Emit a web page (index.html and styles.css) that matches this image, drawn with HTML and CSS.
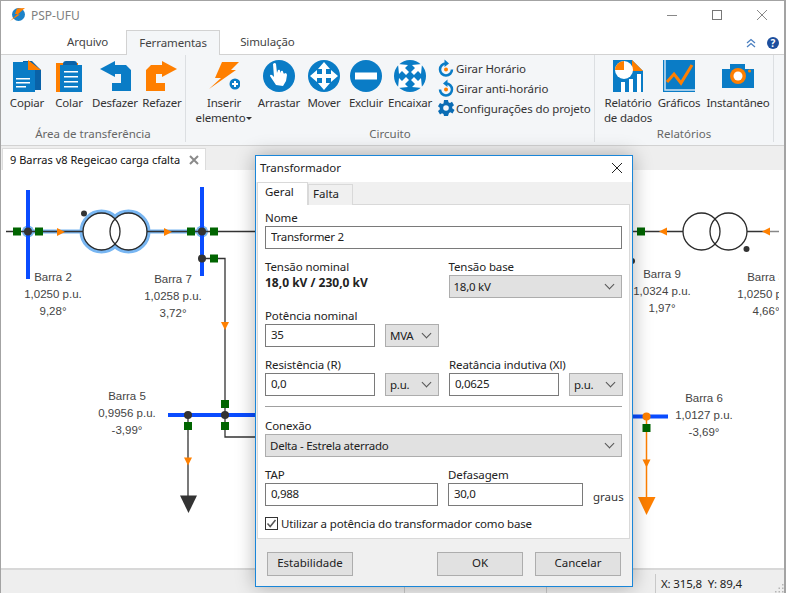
FILE: index.html
```html
<!DOCTYPE html>
<html lang="pt-BR">
<head>
<meta charset="UTF-8">
<title>PSP-UFU</title>
<link rel="stylesheet" href="styles.css">
</head>
<body>

<div class="window">

  <div class="titlebar">
    <svg class="logo" viewBox="0 0 16 16" width="16" height="16">
      <circle cx="8.5" cy="7.5" r="6.5" fill="#1c82c8"/>
      <path d="M15 1L7 1.5L5 7H7.5L0 14L10 7.5H7.5Z" fill="#ff7f00"/>
    </svg>
    <span class="app-name">PSP-UFU</span>
    <div class="win-controls">
      <svg viewBox="0 0 10 10" width="10" height="10"><path d="M0 5.5H10" stroke="#888" fill="none"/></svg>
      <svg viewBox="0 0 10 10" width="10" height="10"><rect x="0.5" y="0.5" width="9" height="9" stroke="#777" fill="none"/></svg>
      <svg viewBox="0 0 10 10" width="10" height="10"><path d="M0 0L10 10M10 0L0 10" stroke="#888" fill="none"/></svg>
    </div>
  </div>

  <div class="menubar">
    <div class="menu-tab tab-file">Arquivo</div>
    <div class="menu-tab active">Ferramentas</div>
    <div class="menu-tab tab-sim">Simulação</div>
    <div class="menu-right">
      <svg viewBox="0 0 10 10" width="10" height="10"><path d="M1 5L5 1.5L9 5M1 9L5 5.5L9 9" stroke="#4a7fc0" stroke-width="1.3" fill="none"/></svg>
      <span class="help">?</span>
    </div>
  </div>

  <div class="ribbon">
    <div class="group group-clip">
      <div class="tools">
        <div class="tool">
          <svg viewBox="0 0 32 32" width="32" height="32">
            <path d="M12 1h9l9 9v20h-6V12H12z" fill="#0a62a8"/>
            <path d="M2 2h15l7 8v23H2z" fill="#0a7cc6"/>
            <path d="M17 0l13 10H17z" fill="#ff7f00"/>
            <path d="M5 18h14v1.500H5zM5 22h14v1.500H5zM5 26h10v1.500H5z" fill="#fff"/>
          </svg>
          <span>Copiar</span>
        </div>
        <div class="tool">
          <svg viewBox="0 0 32 32" width="32" height="32">
            <path d="M3 3h22v29H3z" fill="#ff7f00"/>
            <path d="M7 5h22v27H7z" fill="#0a7cc6"/>
            <path d="M10 4q0-3 3-3h8q3 0 3 3v1H10z" fill="#0a62a8"/>
            <path d="M11 11h14v1.500H11zM11 16h14v1.500H11zM11 21h14v1.500H11zM11 26h14v1.500H11z" fill="#fff"/>
          </svg>
          <span>Colar</span>
        </div>
        <div class="tool">
          <svg viewBox="0 0 32 32" width="32" height="32">
            <path d="M1 9L16 1V5H27L32 10V31H13V23H22V14H16V17Z" fill="#0a7cc6"/>
          </svg>
          <span>Desfazer</span>
        </div>
        <div class="tool">
          <svg viewBox="0 0 32 32" width="32" height="32">
            <path d="M31 9L16 1V5H5L0 10V31H19V23H10V14H16V17Z" fill="#ff7f00"/>
          </svg>
          <span>Refazer</span>
        </div>
      </div>
      <div class="group-label">Área de transferência</div>
    </div>

    <div class="group group-circuit">
      <div class="tools">
        <div class="tool">
          <svg viewBox="0 0 32 32" width="32" height="32">
            <path d="M14 2H31L23 10H28L1 29L13 18H7Z" fill="#ff7f00"/>
            <circle cx="27" cy="24" r="5.500" fill="#0a7cc6"/>
            <path d="M27 21V27M24 24H30" stroke="#fff" stroke-width="2"/>
          </svg>
          <span>Inserir<br>elemento<i class="caret"></i></span>
        </div>
        <div class="tool">
          <svg viewBox="0 0 32 32" width="32" height="32">
            <circle cx="16" cy="16" r="16" fill="#0a7cc6"/>
            <path d="M10 4q2-2 3 0l1 9 1-3q2-1 2 1l1 2 0-2q2-1 2 1l1 2 1-1q2 0 2 2l-1 6-3 5-7-1-6-9q0-2 2-1l2 2z" fill="#fff"/>
          </svg>
          <span>Arrastar</span>
        </div>
        <div class="tool">
          <svg viewBox="0 0 32 32" width="32" height="32">
            <circle cx="16" cy="16" r="16" fill="#0a7cc6"/>
            <path d="M16 2l6 7h-4v5h5v-4l7 6-7 6v-4h-5v5h4l-6 7-6-7h4v-5H9v4l-7-6 7-6v4h5V9h-4z" fill="#fff"/>
          </svg>
          <span>Mover</span>
        </div>
        <div class="tool">
          <svg viewBox="0 0 32 32" width="32" height="32">
            <circle cx="16" cy="16" r="16" fill="#0a7cc6"/>
            <rect x="5" y="12.500" width="22" height="7" fill="#fff"/>
          </svg>
          <span>Excluir</span>
        </div>
        <div class="tool">
          <svg viewBox="0 0 32 32" width="32" height="32">
            <circle cx="16" cy="16" r="16" fill="#0a7cc6"/>
            <g fill="#fff">
              <path d="M4 4L14 5L11 8L15 12L12 15L8 11L5 14Z"/>
              <path d="M4 4L14 5L11 8L15 12L12 15L8 11L5 14Z" transform="rotate(90 16 16)"/>
              <path d="M4 4L14 5L11 8L15 12L12 15L8 11L5 14Z" transform="rotate(180 16 16)"/>
              <path d="M4 4L14 5L11 8L15 12L12 15L8 11L5 14Z" transform="rotate(270 16 16)"/>
            </g>
          </svg>
          <span>Encaixar</span>
        </div>
        <div class="tool-list">
          <div class="tool-row">
            <svg viewBox="0 0 18 18" width="18" height="18">
              <path d="M9 4.500A6 6 0 1 0 15 10.500" stroke="#0a7cc6" stroke-width="2.500" fill="none"/>
              <path d="M7.500 0.500V8L12 4.500Z" fill="#0a7cc6"/>
              <circle cx="9" cy="10.500" r="2" fill="#ff7f00"/>
            </svg>
            <span>Girar Horário</span>
          </div>
          <div class="tool-row">
            <svg viewBox="0 0 18 18" width="18" height="18">
              <path d="M9 4.500A6 6 0 1 1 3 10.500" stroke="#0a7cc6" stroke-width="2.500" fill="none"/>
              <path d="M10.500 0.500V8L6 4.500Z" fill="#0a7cc6"/>
              <circle cx="9" cy="10.500" r="2" fill="#ff7f00"/>
            </svg>
            <span>Girar anti-horário</span>
          </div>
          <div class="tool-row">
            <svg viewBox="0 0 18 18" width="18" height="18">
              <path d="M7 1h4l.5 2.300 1.500.7 2-1.200 2 3.400-1.800 1.500v1.600L17.500 11l-2 3.400-2-1.200-1.500.7L11 17H7l-.5-2.100-1.500-.7-2 1.200L1 12l1.800-1.500V8.800L1 7.300 3 3.900l2 1.200 1.500-.7z" fill="#0a6cb4"/>
              <circle cx="9" cy="9" r="2.800" fill="#f4f6f8"/>
            </svg>
            <span>Configurações do projeto</span>
          </div>
        </div>
      </div>
      <div class="group-label">Circuito</div>
    </div>

    <div class="group group-reports">
      <div class="tools">
        <div class="tool">
          <svg viewBox="0 0 32 32" width="32" height="32">
            <path d="M1 0H20L31 11V32H1Z" fill="#0a7cc6"/>
            <path d="M20 0L31 11H20Z" fill="#ff7f00"/>
            <circle cx="12" cy="10" r="9" fill="#fff"/>
            <path d="M12 10H3A9 9 0 0 1 12 1Z" fill="#ff7f00"/>
            <path d="M9 22h4v10H9zM17 19h4v13h-4zM25 14h4v18h-4z" fill="#fff"/>
          </svg>
          <span>Relatório<br>de dados</span>
        </div>
        <div class="tool">
          <svg viewBox="0 0 32 32" width="32" height="32">
            <rect width="32" height="32" fill="#0a7cc6"/>
            <path d="M2 0V30H32" stroke="#cfe4f5" stroke-width="1.500" fill="none"/>
            <path d="M4 22L11 14L18 23L29 5" stroke="#ff7f00" stroke-width="3" fill="none"/>
          </svg>
          <span>Gráficos</span>
        </div>
        <div class="tool">
          <svg viewBox="0 0 32 32" width="32" height="32">
            <path d="M0 9H8V4H23V9H32V28H0Z" fill="#0a7cc6"/>
            <circle cx="16" cy="16" r="8" fill="#ff7f00"/>
            <circle cx="16" cy="16" r="4.500" fill="#fff"/>
            <circle cx="27.500" cy="11" r="1.500" fill="#ff7f00"/>
          </svg>
          <span>Instantâneo</span>
        </div>
      </div>
      <div class="group-label">Relatórios</div>
    </div>
  </div>

  <div class="doc-tabs">
    <div class="doc-tab">
      <span>9 Barras v8 Regeicao carga cfalta</span>
      <svg viewBox="0 0 10 10" width="10" height="10"><path d="M1 1L9 9M9 1L1 9" stroke="#8a8a8a" stroke-width="2" fill="none"/></svg>
    </div>
  </div>

  <div class="canvas">
    <svg class="diagram" viewBox="2 170 780 398" width="780" height="398">
      <!-- selected parts of the circuit -->
      <path class="glow" d="M28 231.500H83M146 231.500H202"/>
      <circle class="glow" cx="101.500" cy="231.500" r="20"/>
      <circle class="glow" cx="128.500" cy="231.500" r="20"/>
      <circle class="glow-dot" cx="202" cy="231.500" r="6"/>
      <circle class="glow-dot" cx="28" cy="231.500" r="6"/>
      <circle class="inner" cx="101.500" cy="231.500" r="18"/>
      <circle class="inner" cx="128.500" cy="231.500" r="18"/>

      <!-- wires -->
      <path class="wire" d="M6 231.500H83M147 231.500H300M202 258.500H225V437H300M188 415V497"/>
      <path class="wire" d="M600 231.500H683M747 231.500H770"/>
      <path class="wire-gray" d="M770 231.500H780"/>
      <path class="wire-on" d="M646.500 416V498"/>

      <!-- buses -->
      <path class="bus" d="M28 190V279M202 187V276M168 415H300M600 416.500H668"/>

      <!-- transformers -->
      <circle class="coil" cx="101.500" cy="231.500" r="18.500"/>
      <circle class="coil" cx="128.500" cy="231.500" r="18.500"/>
      <circle class="coil" cx="701.500" cy="231.500" r="18.500"/>
      <circle class="coil" cx="728.500" cy="231.500" r="18.500"/>
      <circle class="node" cx="84" cy="213.500" r="3"/>
      <circle class="node" cx="746.500" cy="249" r="3"/>
      <circle class="node" cx="632" cy="261" r="3"/>

      <!-- nodes -->
      <circle class="node" cx="28" cy="231.500" r="4"/>
      <circle class="node" cx="202" cy="231.500" r="4"/>
      <circle class="node" cx="202" cy="258.500" r="4"/>
      <circle class="node" cx="188" cy="415" r="4"/>
      <circle class="node" cx="225" cy="415" r="4"/>
      <circle class="node-on" cx="646.500" cy="416.500" r="4"/>

      <!-- breakers -->
      <rect class="breaker" x="13" y="227.500" width="8" height="8"/>
      <rect class="breaker" x="35" y="227.500" width="8" height="8"/>
      <rect class="breaker" x="187" y="227.500" width="8" height="8"/>
      <rect class="breaker" x="210" y="227.500" width="8" height="8"/>
      <rect class="breaker" x="210" y="254.500" width="8" height="8"/>
      <rect class="breaker" x="221" y="400" width="8" height="8"/>
      <rect class="breaker" x="221" y="422" width="8" height="8"/>
      <rect class="breaker" x="184" y="422" width="8" height="8"/>
      <rect class="breaker" x="637" y="227.500" width="8" height="8"/>
      <rect class="breaker" x="642.500" y="424" width="8" height="8"/>

      <!-- flow arrows -->
      <path class="flow" d="M57 228V236L65 232Z"/>
      <path class="flow" d="M164 228V236L172 232Z"/>
      <path class="flow" d="M221 322H229L225 330Z"/>
      <path class="flow" d="M184 457.500H192L188 465.500Z"/>
      <path class="flow" d="M667 227.500V235.500L659 231.500Z"/>
      <path class="flow" d="M770 227.500V235.500L762 231.500Z"/>
      <path class="flow" d="M642.500 459.500H650.500L646.500 467.500Z"/>

      <!-- loads -->
      <path class="load" d="M180 495.500H197L188.500 513Z"/>
      <path class="load-on" d="M638 497H655.500L646.500 515Z"/>

      <!-- labels -->
      <g class="tag">
        <text x="53" y="281">Barra 2</text><text x="53" y="298">1,0250 p.u.</text><text x="53" y="315">9,28°</text>
        <text x="173" y="283">Barra 7</text><text x="173" y="300">1,0258 p.u.</text><text x="173" y="317">3,72°</text>
        <text x="127" y="400">Barra 5</text><text x="127" y="417">0,9956 p.u.</text><text x="127" y="434">-3,99°</text>
        <text x="662" y="278">Barra 9</text><text x="662" y="295">1,0324 p.u.</text><text x="662" y="312">1,97°</text>
        <text x="766" y="281">Barra 3</text><text x="766" y="298">1,0250 p.u.</text><text x="766" y="315">4,66°</text>
        <text x="704" y="402">Barra 6</text><text x="704" y="419">1,0127 p.u.</text><text x="704" y="436">-3,69°</text>
      </g>
      <rect x="779" y="170" width="4" height="398" fill="#fff"/>
    </svg>
  </div>

  <div class="statusbar">
    <div class="status-cell status-a"></div>
    <div class="status-cell status-b"></div>
    <div class="status-cell status-c"></div>
    <div class="status-cell status-xy">X: 315,8&nbsp; Y: 89,4</div>
    <svg class="grip" viewBox="0 0 10 10" width="10" height="10">
      <path d="M8 1h1.500v1.500H8zM4.500 4.500H6V6H4.500zM8 4.500h1.500V6H8zM1 8h1.500v1.500H1zM4.500 8H6v1.500H4.500zM8 8h1.500v1.500H8z" fill="#b5b5b5"/>
    </svg>
  </div>

  <!-- Transformer dialog -->
  <div class="dialog">
    <div class="dialog-title">
      <span>Transformador</span>
      <svg viewBox="0 0 10 10" width="10" height="10"><path d="M0 0L10 10M10 0L0 10" stroke="#222" fill="none"/></svg>
    </div>
    <div class="dialog-tabs">
      <div class="dialog-tab active">Geral</div>
      <div class="dialog-tab">Falta</div>
    </div>
    <div class="panel">
      <div class="row">
        <div class="col-full">
          <label>Nome</label>
          <input type="text" value="Transformer 2">
        </div>
      </div>
      <div class="row split">
        <div class="col">
          <label>Tensão nominal</label>
          <strong>18,0 kV / 230,0 kV</strong>
        </div>
        <div class="col">
          <label>Tensão base</label>
          <div class="combo"><span>18,0 kV</span><i class="chevron"></i></div>
        </div>
      </div>
      <div class="row split">
        <div class="col">
          <label>Potência nominal</label>
          <div class="pair">
            <input type="text" value="35">
            <div class="combo"><span>MVA</span><i class="chevron"></i></div>
          </div>
        </div>
      </div>
      <div class="row split">
        <div class="col">
          <label>Resistência (R)</label>
          <div class="pair">
            <input type="text" value="0,0">
            <div class="combo"><span>p.u.</span><i class="chevron"></i></div>
          </div>
        </div>
        <div class="col">
          <label>Reatância indutiva (Xl)</label>
          <div class="pair">
            <input type="text" value="0,0625">
            <div class="combo"><span>p.u.</span><i class="chevron"></i></div>
          </div>
        </div>
      </div>
      <hr>
      <div class="row row-after-rule">
        <div class="col-full">
          <label>Conexão</label>
          <div class="combo"><span>Delta - Estrela aterrado</span><i class="chevron"></i></div>
        </div>
      </div>
      <div class="row split">
        <div class="col">
          <label>TAP</label>
          <input type="text" value="0,988">
        </div>
        <div class="col">
          <label>Defasagem</label>
          <div class="pair pair-unit">
            <input type="text" value="30,0">
            <span class="unit">graus</span>
          </div>
        </div>
      </div>
      <div class="check-row">
        <svg viewBox="0 0 13 13" width="13" height="13">
          <rect x="0.500" y="0.500" width="12" height="12" fill="#fff" stroke="#333"/>
          <path d="M2.500 6.500L5.200 9.500L10.500 3" stroke="#555" stroke-width="1.500" fill="none"/>
        </svg>
        <span>Utilizar a potência do transformador como base</span>
      </div>
    </div>
    <div class="dialog-footer">
      <div class="btn">Estabilidade</div>
      <div class="btn btn-push">OK</div>
      <div class="btn">Cancelar</div>
    </div>
  </div>

</div>

</body>
</html>
```

FILE: styles.css
```css
* {
  box-sizing: border-box;
}
html, body {
  margin: 0;
  padding: 0;
}
body {
  font-family: "Noto Sans", Arial, sans-serif;
  font-size: 11.5px;
  color: #222;
  background-color: #fff;
}
.window {
  position: relative;
  display: flex;
  flex-direction: column;
  width: 786px;
  height: 593px;
  overflow: hidden;
  border: 1px solid #a3a3a3;
  border-width: 1px 2px 0 1px;
  background-color: #fff;
}

/* title bar */
.titlebar {
  display: flex;
  align-items: center;
  height: 29px;
  padding-left: 9px;
  background-color: #fff;
}
.app-name {
  margin-left: 5px;
  font-size: 12px;
  color: #808080;
}
.win-controls {
  display: flex;
  gap: 35px;
  margin-left: auto;
  padding-right: 17px;
}

/* menu tabs */
.menubar {
  display: flex;
  align-items: flex-end;
  height: 26px;
  padding-left: 52px;
  border-bottom: 1px solid #d2d2d2;
}
.menu-tab {
  position: relative;
  top: 1px;
  height: 25px;
  padding-top: 4px;
  text-align: center;
  color: #444;
  letter-spacing: -0.1px;
}
.tab-file {
  padding: 4px 18px 0 14px;
}
.tab-sim {
  padding-left: 20px;
}
.menu-tab.active {
  width: 94px;
  padding: 4px 0 0 0;
  background-color: #f4f6f8;
  border: 1px solid #d2d2d2;
  border-bottom: none;
}
.menu-right {
  display: flex;
  align-items: center;
  gap: 11px;
  margin-left: auto;
  padding: 0 5px 5px 0;
}
.help {
  width: 12px;
  height: 12px;
  border-radius: 50%;
  background-color: #1d4f9e;
  color: #fff;
  font-size: 10px;
  font-weight: bold;
  line-height: 12px;
  text-align: center;
}

/* ribbon */
.ribbon {
  display: flex;
  height: 91px;
  padding-bottom: 3px;
  background-color: #f4f6f8;
  border-bottom: 1px solid #d2d2d2;
}
.group {
  position: relative;
  height: 87px;
  border-right: 1px solid #dcdfe2;
}
.group-clip {
  width: 185px;
}
.group-circuit {
  width: 409px;
}
.group-reports {
  width: 179px;
}
.tools {
  display: grid;
  padding-top: 5px;
}
.group-clip .tools {
  grid-template-columns: 52px 32px 60px 34px;
}
.group-circuit .tools {
  grid-template-columns: 76px 34px 56px 28px 60px auto;
}
.group-reports .tools {
  grid-template-columns: 66px 36px 82px;
}
.tool {
  display: flex;
  flex-direction: column;
  align-items: center;
  line-height: 15px;
  text-align: center;
  color: #333;
  letter-spacing: -0.2px;
}
.tool span {
  margin-top: 3px;
  white-space: nowrap;
}
.caret {
  display: inline-block;
  margin-left: 1px;
  vertical-align: middle;
  border-left: 3px solid transparent;
  border-right: 3px solid transparent;
  border-top: 3px solid #333;
}
.tool-list {
  display: flex;
  flex-direction: column;
  margin: -2px 0 0 -3px;
}
.tool-row {
  display: flex;
  align-items: center;
  gap: 1px;
  height: 20px;
  white-space: nowrap;
  color: #333;
  letter-spacing: -0.1px;
}
.group-label {
  position: absolute;
  left: 0;
  right: 0;
  bottom: 1px;
  line-height: 15px;
  text-align: center;
  color: #666;
}

/* document tabs */
.doc-tabs {
  height: 24px;
  padding: 2px 0 0 1px;
  background-color: #eee;
}
.doc-tab {
  display: flex;
  align-items: center;
  justify-content: space-between;
  width: 204px;
  height: 22px;
  padding: 0 6px 0 7px;
  font-size: 11px;
  background-color: #fff;
  border: 1px solid #dcdcdc;
  border-bottom: none;
  color: #111;
}

/* circuit canvas */
.canvas {
  height: 398px;
  padding-left: 1px;
  background-color: #fff;
}
.diagram {
  display: block;
}
.wire {
  fill: none;
  stroke: #333;
  stroke-width: 1.3;
}
.wire-gray {
  fill: none;
  stroke: #888;
  stroke-width: 1.5;
}
.wire-on {
  fill: none;
  stroke: #ff8000;
  stroke-width: 1.5;
}
.glow {
  fill: none;
  stroke: #78b6f2;
  stroke-width: 4;
}
.glow-dot {
  fill: #78b6f2;
}
.inner {
  fill: #fff;
}
.bus {
  fill: none;
  stroke: #0a4cff;
  stroke-width: 4;
}
.coil {
  fill: none;
  stroke: #2a2a2a;
  stroke-width: 1.3;
}
.node {
  fill: #333;
}
.node-on {
  fill: #ff8000;
}
.breaker {
  fill: #006400;
}
.flow {
  fill: #ff8000;
}
.load {
  fill: #333;
}
.load-on {
  fill: #ff8000;
}
.tag text {
  font-family: "Liberation Sans", Arial, sans-serif;
  font-size: 11.5px;
  fill: #444;
  text-anchor: middle;
}

/* status bar */
.statusbar {
  display: flex;
  flex: 1;
  align-items: center;
  border-top: 2px solid #d8d8d8;
  background-color: #eee;
}
.status-cell {
  height: 19px;
  margin-top: 4px;
  border-right: 1px solid #c8c8c8;
}
.status-a {
  width: 404px;
}
.status-b {
  width: 142px;
}
.status-c {
  width: 109px;
}
.status-xy {
  padding: 2px 0 0 5px;
  border-right: none;
  color: #222;
  letter-spacing: -0.15px;
}
.grip {
  margin: 12px 0 0 auto;
}

/* dialog */
.dialog {
  position: absolute;
  left: 254px;
  top: 154px;
  width: 378px;
  height: 432px;
  border: 1px solid #1a86d8;
  background-color: #f0f0f0;
  box-shadow: 0 0 18px rgba(0, 0, 0, 0.3);
}
.dialog-title {
  display: flex;
  align-items: center;
  justify-content: space-between;
  height: 26px;
  padding: 0 10px 3px 4px;
  background-color: #fff;
  color: #222;
}
.dialog-tabs {
  display: flex;
  align-items: flex-end;
  height: 22px;
  padding-left: 1px;
}
.dialog-tab {
  position: relative;
  top: 1px;
  width: 45px;
  height: 21px;
  padding: 1px 0 0 4px;
  background-color: #f0f0f0;
  border: 1px solid #d9d9d9;
  border-bottom: none;
}
.dialog-tab.active {
  z-index: 1;
  width: 51px;
  height: 23px;
  padding: 1px 0 0 7px;
  background-color: #fff;
  border-right-color: #d9d9d9;
}
.panel {
  width: 373px;
  height: 335px;
  margin-left: 1px;
  padding: 5px 7px 0 7px;
  background-color: #fff;
  border: 1px solid #d9d9d9;
}
.panel label {
  display: block;
  height: 16px;
  line-height: 16px;
  color: #222;
  letter-spacing: -0.1px;
}
.panel strong {
  display: block;
  font-size: 12px;
  line-height: 16px;
}
.panel input {
  width: 100%;
  height: 23px;
  padding: 0 4px 3px 5px;
  font-family: inherit;
  font-size: inherit;
  letter-spacing: -0.3px;
  color: #222;
  background-color: #fff;
  border: 1px solid #7a7a7a;
  border-radius: 0;
  outline: none;
}
.row {
  margin-bottom: 10px;
}
.split {
  display: flex;
  gap: 10px;
}
.col {
  width: 174px;
}
.pair {
  display: flex;
  gap: 10px;
}
.pair input {
  width: 110px;
}
.pair .combo {
  width: 54px;
}
.pair-unit input {
  width: 135px;
}
.unit {
  align-self: flex-end;
  color: #333;
  line-height: 18px;
}
.combo {
  display: flex;
  align-items: center;
  justify-content: space-between;
  height: 23px;
  padding: 0 6px 0 4px;
  letter-spacing: -0.25px;
  background-color: #e1e1e1;
  border: 1px solid #adadad;
  color: #222;
}
.chevron {
  width: 7px;
  height: 7px;
  margin: 0 2px 4px 0;
  border-right: 1px solid #555;
  border-bottom: 1px solid #555;
  transform: rotate(45deg);
}
.panel hr {
  height: 1px;
  margin: 0 0 11px 0;
  border: none;
  background-color: #a0a0a0;
}
.check-row {
  display: flex;
  align-items: center;
  gap: 3px;
  height: 15px;
  letter-spacing: -0.16px;
}

/* dialog buttons */
.dialog-footer {
  display: flex;
  gap: 12px;
  padding: 13px 11px 0 11px;
}
.btn {
  width: 86px;
  height: 24px;
  line-height: 20px;
  text-align: center;
  background-color: #e1e1e1;
  border: 1px solid #adadad;
  color: #222;
}
.btn-push {
  margin-left: auto;
}
```
